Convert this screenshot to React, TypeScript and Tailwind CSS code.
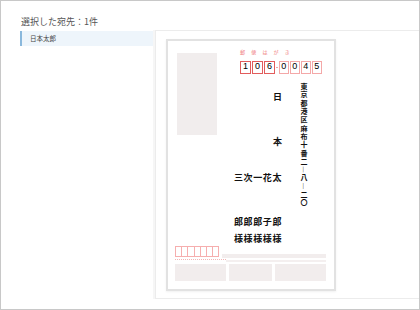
import React from "react";

const jp = { fontFamily: '"Noto Sans CJK JP", "Noto Sans", sans-serif' };
const digitFont = { fontFamily: '"Liberation Sans", sans-serif' };

function CodeBox({ d, dark }: { d: string; dark: boolean }) {
  return (
    <div
      className={
        dark
          ? "w-[11px] h-[13px] border border-[#e25c5c] flex items-center justify-center text-[9px] text-black"
          : "w-[10.5px] h-[13px] border border-[#f4a8a8] flex items-center justify-center text-[9px] text-black"
      }
      style={digitFont}
    >
      {d}
    </div>
  );
}

function Postcard() {
  return (
    <div className="w-[170px] h-[252px] border-2 border-[#e2e2e2] bg-white shadow-[0_1px_2px_rgba(0,0,0,0.06)] flex flex-col">
      {/* top area */}
      <div className="flex items-start pt-[7px] pl-[9px]">
        <div className="mt-[5px] w-[40px] h-[82px] bg-[#f1eded]" />
        <div className="ml-[23px] w-[82px] flex flex-col">
          <div className="mt-[1px] text-[5px] leading-[6px] tracking-[6.2px] text-[#ef7a7a] whitespace-nowrap">郵便はがき</div>
          <div className="mt-[5.5px] flex items-center">
            <div className="flex gap-px">
              {["1", "0", "6"].map((d, i) => (
                <CodeBox key={i} d={d} dark />
              ))}
            </div>
            <div className="w-[4px] flex items-center justify-center">
              <div className="w-[2px] h-px bg-[#f0a0a0]" />
            </div>
            <div className="flex gap-[0.5px]">
              {["0", "0", "4", "5"].map((d, i) => (
                <CodeBox key={i} d={d} dark={false} />
              ))}
            </div>
          </div>
          <div className="flex items-start">
            <div className="w-[42px] flex flex-col items-end text-[9px] leading-[12px] font-bold text-[#111] whitespace-nowrap">
              <div className="mt-[17.5px]">日</div>
              <div className="mt-[33px]">本</div>
              <div className="mt-[24px] tracking-[0.6px]">三次一花太</div>
              <div className="mt-[32px] tracking-[0.6px]">郎郎郎子郎</div>
              <div className="mt-[5px] tracking-[0.6px]">様様様様様</div>
            </div>
            <div
              className="ml-[18px] mt-[9.5px] text-[7px] leading-[8px] font-bold tracking-[1.3px] text-[#111]"
              style={{ writingMode: "vertical-rl" }}
            >
              東京都港区麻布十番二―八―二〇
            </div>
          </div>
        </div>
      </div>
      {/* bottom area */}
      <div className="mt-auto pl-[7px] pr-[8px] pb-[8px] flex flex-col">
        <div className="flex items-start">
          <div className="flex">
            {[0, 1, 2, 3, 4, 5, 6].map((i) => (
              <div key={i} className="w-[7.2px] h-[11px] border border-[#f6aeae] -ml-px first:ml-0" />
            ))}
          </div>
          <div className="ml-[3px] mt-[8px] flex-1 h-[4px] bg-[#f2eded]" />
        </div>
        <div className="mt-px flex h-[3px]">
          <div className="w-[51px] border-t border-dotted border-[#f2b4b4]" />
          <div className="flex-1 mt-px h-[2px] bg-[#f4efef]" />
        </div>
        <div className="mt-[2px] flex gap-[3px]">
          <div className="w-[51px] h-[17px] bg-[#f2eded]" />
          <div className="w-[43px] h-[17px] bg-[#f2eded]" />
          <div className="flex-1 h-[17px] bg-[#f2eded]" />
        </div>
      </div>
    </div>
  );
}

function App() {
  return (
    <div className="w-[420px] h-[310px] bg-white border border-[#c8c8c8] flex flex-col" style={jp}>
      <div className="pl-[20px] pt-[15px] h-[29px] text-[9px] leading-[12px] text-[#555]">選択した宛先：1件</div>
      <div className="flex items-start">
        <div className="ml-[19px] mt-[1px] w-[133px] h-[15px] bg-[#eef5fb] border-l-2 border-[#8ab8dc] flex items-center pl-[8px] text-[6.5px] text-[#444]">
          日本太郎
        </div>
        <div className="ml-[2px] flex-1 h-[269px] border-l border-t border-b border-[#ececec] shadow-[-2px_0_0_#f6f6f6] pl-[10px] pt-[8px]">
          <Postcard />
        </div>
      </div>
    </div>
  );
}

export default App;
